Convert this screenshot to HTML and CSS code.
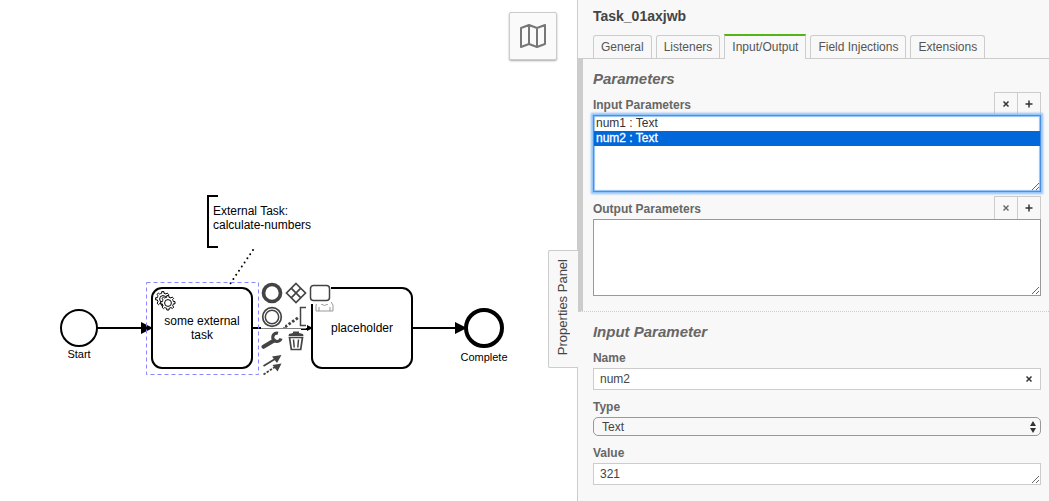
FILE: index.html
```html
<!DOCTYPE html>
<html lang="en">
<head>
<meta charset="utf-8">
<title>Process Modeler</title>
<link rel="stylesheet" href="styles.css">
</head>
<body>
<div class="modeler">
  <main class="canvas">
    <svg class="diagram" role="img" aria-label="Process diagram">
      <defs>
        <marker id="arrow" viewBox="0 0 12 12" refX="11" refY="6" markerWidth="12" markerHeight="12" markerUnits="userSpaceOnUse" orient="auto"><path d="M0 0L12 6L0 12z"/></marker>
        <path id="gear" d="m0 0v-1.71c.35-.07.7-.18 1.05-.32.34-.15.66-.32.96-.52l1.2 1.18 1.57-1.58-1.2-1.18c.4-.61.68-1.3.83-2.02l1.62-.01v-2.22l-1.64.01c-.07-.35-.18-.7-.32-1.04-.15-.34-.32-.66-.52-.96l1.13-1.14-1.58-1.56-1.13 1.14c-.62-.4-1.3-.68-2.03-.83l.01-1.62h-2.24v1.63c-.35.08-.7.18-1.05.33-.34.14-.66.32-.96.52l-1.17-1.16-1.57 1.58 1.17 1.16c-.4.61-.68 1.3-.82 2.01h-1.66v2.23h1.67c.07.35.18.7.33 1.04.14.34.32.66.52.96l-1.2 1.2 1.58 1.56 1.2-1.19c.61.4 1.3.68 2.02.82v1.7z"/>
      </defs>
      <g class="shape">
        <circle cx="79" cy="328" r="18"/>
        <rect x="152" y="288" width="100" height="80" rx="10"/>
        <rect x="312" y="288" width="100" height="80" rx="10"/>
        <path d="M218 196H208V247H218"/>
        <circle class="end" cx="484" cy="328" r="18"/>
      </g>
      <g class="flow">
        <path d="M97 328H152"/><path d="M252 328H312"/><path d="M412 328H466"/>
      </g>
      <path class="flow-veil" d="M261 328H306"/>
      <path class="association" d="M253 250L230 284"/>
      <g class="gears">
        <use href="#gear" x="164" y="306"/><circle cx="163" cy="299" r="3.400"/>
        <use href="#gear" x="169" y="310"/><circle cx="168" cy="303" r="3.400"/>
      </g>
      <g class="user-mark"><path d="M316 311V305L318 302M316 311H333V305L331 302M319 311V307M330 311V307M321 304Q324.500 307 328 304"/></g>
      <rect class="selection" x="146.500" y="282.500" width="112" height="92"/>
      <g class="label">
        <text x="213" y="215">External Task:</text><text x="213" y="229">calculate-numbers</text>
        <g class="centered">
          <text x="202" y="325">some external</text><text x="202" y="339">task</text>
          <text x="362" y="332">placeholder</text>
          <text class="small" x="79" y="358">Start</text><text class="small" x="484" y="361">Complete</text>
        </g>
      </g>
    </svg>
    <div class="context-pad">
      <button aria-label="Append end event"><svg viewBox="0 0 22 22"><circle cx="11" cy="11" r="8.500" stroke-width="3.700"/></svg></button>
      <button aria-label="Append gateway"><svg viewBox="0 0 22 22"><path d="M11 1.500L20.500 11L11 20.500L1.500 11zM6.200 6.200L15.800 15.800M15.800 6.200L6.200 15.800" stroke-width="1.700"/></svg></button>
      <button aria-label="Append task"><svg viewBox="0 0 22 22"><rect x="1.500" y="3.500" width="19" height="15" rx="3" stroke-width="1.500"/></svg></button>
      <button aria-label="Append intermediate event"><svg viewBox="0 0 22 22"><circle cx="11" cy="11" r="9.300" stroke-width="1.700"/><circle cx="11" cy="11" r="6.700" stroke-width="1.500"/></svg></button>
      <button aria-label="Append text annotation"><svg viewBox="0 0 22 22"><path d="M21 1.500H15.500V19.500H21" stroke-width="1.500"/><path d="M0 21L14 11" stroke-width="2.800" stroke-dasharray="2.600 1.800"/></svg></button>
      <button class="row3" aria-label="Change type"><svg viewBox="0 0 22 22"><path d="M2.500 16.800L13 10.500" stroke-width="4" stroke-linecap="round"/><path d="M17 3.200A4.200 4.200 0 1 0 20 8.500" stroke-width="3.200"/></svg></button>
      <button aria-label="Remove"><svg viewBox="0 0 22 22"><path d="M3.500 6L4 4L8 3V1.500H14V3L18 4L18.500 6z" fill="#444" stroke="none"/><path d="M4.500 7.500H17.500L15.700 19.500H6.300z" stroke-width="1.700"/><path d="M8.500 9.500L9.200 17.500M13.500 9.500L12.800 17.500" stroke-width="1.500"/></svg></button>
      <button class="row4" aria-label="Connect"><svg viewBox="0 0 22 22"><path d="M2.500 12L14 5" stroke-width="1.800"/><path d="M2.500 20.500L14 13" stroke-width="1.800" stroke-dasharray="2.500 1.300"/><path d="M20.500 1L16 9L11 2.500zM20.500 9.500L16.500 17.500L11.500 11z" fill="#444" stroke="none"/></svg></button>
    </div>
    <button class="minimap" aria-label="Toggle minimap"><svg viewBox="0 0 28 24"><path d="M2 4L10 1L18 4L26 1V20L18 23L10 20L2 23zM10 1V20M18 4V23"/></svg></button>
  </main>

  <aside class="panel">
    <button class="panel-toggle"><span>Properties Panel</span></button>
    <header class="panel-header">
      <h1>Task_01axjwb</h1>
      <nav class="tabs">
        <a href="#general">General</a><a href="#listeners">Listeners</a><a class="active" href="#io">Input/Output</a><a href="#fields">Field Injections</a><a href="#extensions">Extensions</a>
      </nav>
    </header>
    <section class="group parameters">
      <h2>Parameters</h2>
      <div class="list-head">
        <label for="inputs">Input Parameters</label>
        <div class="actions">
          <button aria-label="Remove input"><svg viewBox="0 0 8 8"><path d="M1.500 1.500L6.500 6.500M6.500 1.500L1.500 6.500"/></svg></button><button aria-label="Add input"><svg viewBox="0 0 8 8"><path d="M4 .5V7.500M.5 4H7.500"/></svg></button>
        </div>
      </div>
      <select id="inputs" class="list current" multiple>
        <option>num1 : Text</option><option selected>num2 : Text</option>
      </select>
      <div class="list-head">
        <label for="outputs">Output Parameters</label>
        <div class="actions">
          <button disabled aria-label="Remove output"><svg viewBox="0 0 8 8"><path d="M1.500 1.500L6.500 6.500M6.500 1.500L1.500 6.500"/></svg></button><button aria-label="Add output"><svg viewBox="0 0 8 8"><path d="M4 .5V7.500M.5 4H7.500"/></svg></button>
        </div>
      </div>
      <select id="outputs" class="list" multiple></select>
    </section>
    <section class="group details">
      <h2>Input Parameter</h2>
      <label for="name">Name</label>
      <div class="field">
        <input id="name" class="box" type="text" value="num2">
        <button class="clear" aria-label="Clear name"><svg viewBox="0 0 8 8"><path d="M1.500 1.500L6.500 6.500M6.500 1.500L1.500 6.500"/></svg></button>
      </div>
      <label for="type">Type</label>
      <div class="field">
        <select id="type" class="dropdown"><option>Text</option></select>
        <svg class="chevrons" viewBox="0 0 6 12"><path d="M3 0L6 5H0zM0 7H6L3 12z"/></svg>
      </div>
      <label for="value">Value</label>
      <textarea id="value" class="box" rows="1">321</textarea>
    </section>
  </aside>
</div>
</body>
</html>
```

FILE: styles.css
```css
* { box-sizing: border-box; }
body {
  margin: 0;
  color: #444;
  font: 12px/14px "Liberation Sans", Arial, sans-serif;
}
button, input, select, textarea { font: inherit; color: inherit; margin: 0; }
button { padding: 0; border: 0; background: none; cursor: pointer; }
.modeler { display: flex; height: 100vh; overflow: hidden; background: #fff; }

/* Canvas */
.canvas { position: relative; flex: 1; min-width: 0; }
.diagram { display: block; width: 100%; height: 100%; }
.shape { fill: none; stroke: #000; stroke-width: 2; }
.shape .end { stroke-width: 4; }
.flow path { stroke: #000; stroke-width: 2; marker-end: url(#arrow); }
.flow marker path { stroke: none; }
.flow-veil { stroke: #fff; stroke-width: 2; opacity: .5; }
.association { stroke: #000; stroke-width: 2; stroke-linecap: round; stroke-dasharray: 0 5; }
.gears { fill: #fff; stroke: #000; stroke-width: 1; }
.user-mark { fill: none; stroke: #999; stroke-width: 1; }
.selection { fill: none; stroke: #88f; stroke-dasharray: 4 3; }
.label { fill: #000; font-size: 12px; }
.centered { text-anchor: middle; }
.label .small { font-size: 11px; }

.context-pad {
  position: absolute;
  left: 261px;
  top: 282px;
  display: grid;
  grid-template-columns: repeat(3, 22px);
  grid-auto-rows: 22px;
  gap: 2px;
}
.context-pad button { background: #fff; }
.context-pad .row3, .context-pad .row4 { grid-column: 1; }
.context-pad svg { display: block; width: 22px; height: 22px; fill: none; stroke: #444; }

.minimap {
  position: absolute;
  top: 12px;
  right: 20px;
  display: grid;
  place-items: center;
  width: 48px;
  height: 48px;
  border: 1px solid #ccc;
  border-radius: 2px;
  background: #fafafa;
  box-shadow: 0 1px 2px #aaa;
}
.minimap svg { width: 28px; height: 24px; fill: none; stroke: #777; stroke-width: 2; stroke-linejoin: round; }

/* Properties panel */
.panel {
  position: relative;
  flex: 0 0 45%;
  border-left: 1px solid #ccc;
  background: #f8f8f8;
}
.panel-toggle {
  position: absolute;
  top: 250px;
  right: 100%;
  height: 118px;
  width: 30px;
  border: 1px solid #ccc;
  border-right: 0;
  border-radius: 2px 0 0 2px;
  background: #f8f8f8;
  font-size: 13px;
}
.panel-toggle span { display: inline-block; writing-mode: vertical-rl; transform: rotate(180deg); }
.panel-header { padding-top: 8px; }
h1 { margin: 0 15px 10px; font-size: 14px; line-height: 16px; }
.tabs {
  display: flex;
  gap: 4px;
  padding: 0 15px;
  border-bottom: 1px solid #ccc;
}
.tabs a {
  height: 23px;
  margin-top: 1px;
  padding: 0 7px;
  border: 1px solid #ccc;
  border-bottom: 0;
  border-radius: 3px 3px 0 0;
  color: #555;
  line-height: 22px;
  text-decoration: none;
}
.tabs .active {
  height: 25px;
  margin: 0 0 -1px;
  border-top: 2px solid #52b415;
  border-radius: 0;
  background: #f8f8f8;
}
.group { padding: 12px 8px 15px 15px; }
.parameters {
  padding-left: 10px;
  border-left: 5px solid #ccc;
  border-bottom: 1px dotted #ccc;
}
h2 {
  margin: 0;
  color: #666;
  font-size: 15px;
  font-style: italic;
  line-height: 16px;
}
label { color: #666; font-weight: bold; }
.list-head { display: flex; justify-content: space-between; align-items: flex-end; height: 27px; }
.list-head label { line-height: 20px; }
h2 + .list-head { height: 28px; }
.actions { display: flex; }
.actions button {
  display: grid;
  place-items: center;
  width: 24px;
  height: 23px;
  border: 1px solid #ccc;
  border-bottom: 0;
}
.actions button + button { margin-left: -1px; }
.actions svg, .clear svg { width: 8px; height: 8px; stroke: #333; stroke-width: 1.500; }
.actions button:disabled svg { opacity: .7; }
.list {
  display: block;
  width: 100%;
  height: 77px;
  padding: 0;
  border: 1px solid #999;
  border-radius: 0;
  background: #fff;
  outline: 0;
  resize: vertical;
  overflow: auto;
}
.list option { min-height: 15px; padding: 0 2px; line-height: 15px; color: #333; }
.list option:checked {
  background: linear-gradient(#0068d9, #0068d9);
  color: #fff;
  -webkit-text-fill-color: #fff;
  -webkit-text-stroke: 0.3px #fff;
}
.current { position: relative; border-color: #4a90e2; box-shadow: 0 0 2px 2px #8fc1f8, inset 0 0 1px 1px #8fc1f8; }

.details { display: flex; flex-direction: column; }
.details h2 { margin-bottom: 11px; }
.details label { margin-bottom: 3px; }
.field { position: relative; display: flex; margin-bottom: 10px; }
.box {
  display: block;
  width: 100%;
  height: 22px;
  padding: 3px 6px;
  border: 1px solid #ccc;
  border-radius: 0;
  background: #fff;
  outline: 0;
  resize: vertical;
}
.clear {
  position: absolute;
  top: 0;
  right: 0;
  display: grid;
  place-items: center;
  width: 24px;
  height: 22px;
}
.dropdown {
  width: 100%;
  height: 19px;
  padding: 0 8px;
  border: 1px solid #999;
  border-radius: 5px;
  background: #f8f8f8;
  appearance: none;
}
.chevrons { position: absolute; top: 4px; right: 5px; width: 6px; height: 12px; fill: #333; pointer-events: none; }
```
